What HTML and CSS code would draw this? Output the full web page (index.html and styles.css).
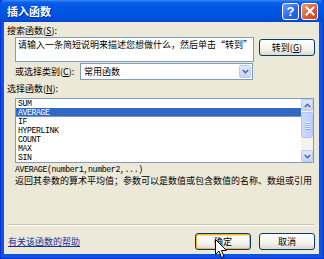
FILE: index.html
```html
<!DOCTYPE html>
<html lang="zh-CN">
<head>
    <meta charset="UTF-8">
    <meta name="viewport" content="width=device-width, initial-scale=1.0">
    <title>插入函数</title>
    <link rel="stylesheet" href="styles.css">
</head>
<body>
    <div class="window">
        <div class="titlebar">
            <span class="title">插入函数</span>
            <div class="caption-btns">
                <span class="cap-btn help">?</span>
                <span class="cap-btn close">
                    <svg width="10" height="10" viewBox="0 0 10 10"><path d="M1.5 1.5 L8.5 8.5 M8.5 1.5 L1.5 8.5" stroke="#fff" stroke-width="2" stroke-linecap="square"/></svg>
                </span>
            </div>
        </div>
        <div class="client">
            <div class="label">搜索函数(<u>S</u>):</div>
            <div class="search-row">
                <div class="textbox">请输入一条简短说明来描述您想做什么，然后单击“转到”</div>
                <button class="btn">转到(<u>G</u>)</button>
            </div>
            <div class="category-row">
                <span class="label-inline">或选择类别(<u>C</u>):</span>
                <div class="combo">
                    <span class="combo-text">常用函数</span>
                    <span class="combo-arrow">
                        <svg width="7" height="5" viewBox="0 0 7 5"><path d="M0.8 1 L3.5 3.7 L6.2 1" fill="none" stroke="#4d6185" stroke-width="1.4"/></svg>
                    </span>
                </div>
            </div>
            <div class="label">选择函数(<u>N</u>):</div>
            <div class="listbox">
                <ul class="items">
                    <li>SUM</li>
                    <li class="selected">AVERAGE</li>
                    <li>IF</li>
                    <li>HYPERLINK</li>
                    <li>COUNT</li>
                    <li>MAX</li>
                    <li>SIN</li>
                </ul>
                <div class="scrollbar">
                    <span class="sb-btn">
                        <svg width="7" height="5" viewBox="0 0 7 5"><path d="M0.8 4 L3.5 1.3 L6.2 4" fill="none" stroke="#4d6185" stroke-width="1.4"/></svg>
                    </span>
                    <span class="sb-thumb"><i></i><i></i><i></i><i></i></span>
                    <span class="sb-track"></span>
                    <span class="sb-btn">
                        <svg width="7" height="5" viewBox="0 0 7 5"><path d="M0.8 1 L3.5 3.7 L6.2 1" fill="none" stroke="#4d6185" stroke-width="1.4"/></svg>
                    </span>
                </div>
            </div>
            <div class="syntax">AVERAGE(number1,number2,...)</div>
            <div class="desc">返回其参数的算术平均值；参数可以是数值或包含数值的名称、数组或引用</div>
            <div class="spacer"></div>
            <div class="separator"></div>
            <div class="bottom-row">
                <a class="help-link" href="#">有关该函数的帮助</a>
                <div class="actions">
                    <button class="btn default">确定</button>
                    <button class="btn">取消</button>
                </div>
            </div>
        </div>
    </div>
    <svg class="cursor" width="13" height="20" viewBox="0 0 13 20">
        <path d="M0.5 0.5 L0.5 15.5 L4 12 L6.5 18.5 L9 17.5 L6.5 11.5 L11.5 11.5 Z" fill="#fff" stroke="#000" stroke-width="1" stroke-linejoin="miter"/>
    </svg>
</body>
</html>
```

FILE: styles.css
```css
body {
    margin: 0;
    font-family: "Noto Sans CJK SC", sans-serif;
    font-size: 9px;
    color: #000;
    background: #fff;
}
.window {
    position: relative;
    width: 324px;
    height: 259px;
    display: flex;
    flex-direction: column;
    background: #0a55e3;
    box-shadow: inset 1px 0 #0831d9, inset -1px 0 #0831d9, inset 0 -1px #0831d9;
}
.titlebar {
    height: 22px;
    display: flex;
    align-items: center;
    justify-content: space-between;
    padding: 0 6px 0 7px;
    background: linear-gradient(#3d8ff5 0, #0f63ea 2px, #0458e6 5px, #0255e3 12px, #0150dc 18px, #0246d0 22px);
    border-radius: 5px 5px 0 0;
}
.title {
    color: #fff;
    font-size: 11px;
    font-weight: bold;
    line-height: 14px;
    text-shadow: 1px 1px #0c2a90;
}
.caption-btns {
    display: flex;
    gap: 2px;
}
.cap-btn {
    width: 15px;
    height: 15px;
    border: 1px solid #fff;
    border-radius: 3px;
    display: flex;
    align-items: center;
    justify-content: center;
    color: #fff;
    font-family: "Liberation Sans", sans-serif;
    font-weight: bold;
    font-size: 13px;
}
.help {
    background: linear-gradient(135deg, #6f9cf9, #2a64ea 60%, #2157dc);
}
.close {
    background: linear-gradient(135deg, #f09a7c, #e2582f 55%, #cc4118);
}
.client {
    flex: 1;
    margin: 0 5px 5px 4px;
    background: #ece9d8;
    display: flex;
    flex-direction: column;
}
.label {
    margin: 3px 0 0 3px;
    line-height: 12px;
    height: 12px;
}
.search-row {
    display: flex;
    align-items: flex-start;
    margin-left: 11px;
}
.textbox {
    width: 239px;
    height: 25px;
    box-sizing: border-box;
    border: 1px solid #7f9db9;
    background: #fff;
    padding: 1px 2px;
    line-height: 12px;
    white-space: nowrap;
    overflow: hidden;
}
.btn {
    width: 56px;
    height: 17px;
    padding: 0;
    box-sizing: border-box;
    border: 1px solid #003c74;
    border-radius: 3px;
    background: linear-gradient(#ffffff, #f4f3ee 60%, #dcd9cc);
    font-family: "Noto Sans CJK SC", sans-serif;
    font-size: 9px;
    line-height: 13px;
    color: #000;
}
.search-row .btn {
    margin: 2px 0 0 5px;
}
.btn.default {
    box-shadow: inset 0 0 0 1px #f8b330, inset 0 1px 0 1px #ffdc8a;
}
.category-row {
    display: flex;
    align-items: center;
    margin: 1px 0 0 11px;
}
.label-inline {
    width: 65px;
    line-height: 12px;
}
.combo {
    width: 173px;
    height: 17px;
    box-sizing: border-box;
    border: 1px solid #7f9db9;
    background: #fff;
    display: flex;
    align-items: center;
    justify-content: space-between;
}
.combo-text {
    padding-left: 3px;
    line-height: 12px;
}
.combo-arrow, .sb-btn {
    width: 12px;
    height: 13px;
    box-sizing: border-box;
    margin-right: 1px;
    border: 1px solid #b9cbf3;
    border-radius: 2px;
    background: linear-gradient(#dfe8fd, #c4d4fb);
    display: flex;
    align-items: center;
    justify-content: center;
}
.listbox {
    margin: 3px 0 0 11px;
    width: 299px;
    height: 65px;
    box-sizing: border-box;
    border: 1px solid #7f9db9;
    background: #fff;
    display: flex;
}
.items {
    list-style: none;
    margin: 0;
    padding: 0;
    flex: 1;
    font-family: "Liberation Mono", monospace;
    font-size: 8.2px;
    letter-spacing: -0.42px;
}
.items li {
    height: 9px;
    line-height: 9px;
    padding-left: 2px;
}
.items li.selected {
    background: #316ac5;
    color: #fff;
    box-shadow: inset 0 -1px #7d95c4;
}
.scrollbar {
    width: 12px;
    display: flex;
    flex-direction: column;
    background: #f4f3ee;
}
.sb-btn {
    height: 12px;
    margin: 0;
}
.sb-thumb {
    height: 26px;
    margin-top: 1px;
    box-sizing: border-box;
    border: 1px solid #b4c8f6;
    border-radius: 2px;
    background: linear-gradient(90deg, #cbdafc, #bccffa);
    display: flex;
    flex-direction: column;
    align-items: center;
    justify-content: center;
    gap: 1px;
}
.sb-thumb i {
    width: 5px;
    height: 1px;
    background: #eef3fe;
    box-shadow: 0 1px #8faaed;
}
.sb-track {
    flex: 1;
}
.syntax {
    margin: 2px 0 0 11px;
    font-family: "Liberation Mono", monospace;
    font-size: 8.2px;
    letter-spacing: -0.35px;
    line-height: 10px;
}
.desc {
    margin-left: 11px;
    line-height: 11px;
    white-space: nowrap;
}
.spacer {
    flex: 1;
}
.separator {
    margin: 0 5px 7px 4px;
    border-top: 1px solid #c9c6b6;
    border-bottom: 1px solid #fff;
}
.bottom-row {
    display: flex;
    align-items: center;
    justify-content: space-between;
    margin: 0 4px 4px 4px;
    height: 17px;
}
.help-link {
    color: #1a2fa0;
    text-decoration: underline;
    line-height: 12px;
}
.actions {
    display: flex;
    gap: 8px;
}
.cursor {
    position: absolute;
    left: 215px;
    top: 239px;
}
```
